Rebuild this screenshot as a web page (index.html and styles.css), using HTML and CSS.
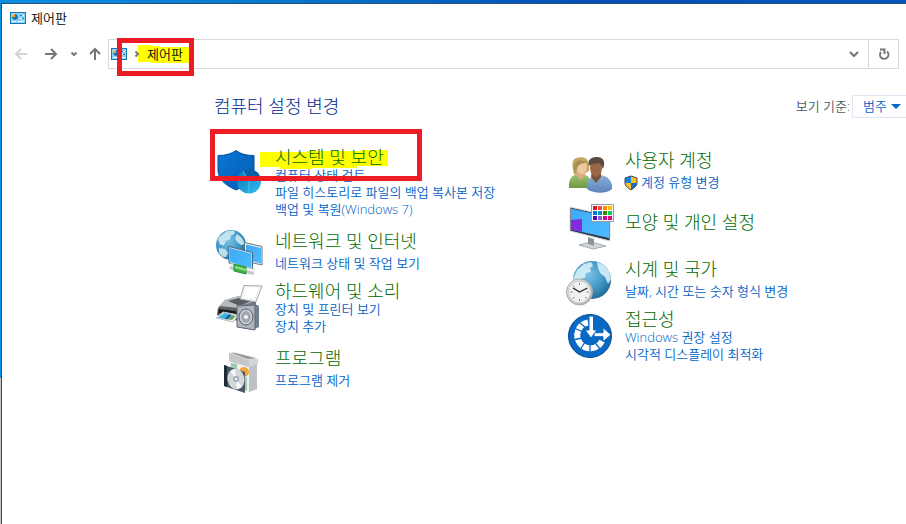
FILE: index.html
```html
<!DOCTYPE html>
<html lang="ko">
<head>
<meta charset="utf-8">
<title>제어판</title>
<link rel="stylesheet" href="styles.css">
</head>
<body>
<svg class="defs" width="0" height="0" aria-hidden="true">
  <defs>
    <linearGradient id="sky" x1="0" y1="0" x2="1" y2="1"><stop offset="0" stop-color="#3fa9f2"/><stop offset="1" stop-color="#4cbcff"/></linearGradient>
    <radialGradient id="globe" cx=".4" cy=".35" r=".7"><stop offset="0" stop-color="#7cc4e6"/><stop offset=".6" stop-color="#3f95c4"/><stop offset="1" stop-color="#1f6795"/></radialGradient>
    <linearGradient id="shield" x1="0" y1="0" x2="1" y2="1"><stop offset="0" stop-color="#0a78d8"/><stop offset="1" stop-color="#0459b0"/></linearGradient>
    <linearGradient id="pie" x1="0" y1="0" x2="1" y2="1"><stop offset="0" stop-color="#1272b8"/><stop offset="1" stop-color="#2cc0ee"/></linearGradient>
    <linearGradient id="metal" x1="0" y1="0" x2="1" y2="1"><stop offset="0" stop-color="#f2f3f4"/><stop offset="1" stop-color="#a2a6aa"/></linearGradient>
    <linearGradient id="dark" x1="0" y1="0" x2="0" y2="1"><stop offset="0" stop-color="#85898d"/><stop offset="1" stop-color="#34373b"/></linearGradient>
    <linearGradient id="green" x1="0" y1="0" x2="0" y2="1"><stop offset="0" stop-color="#a1c46e"/><stop offset="1" stop-color="#6e9a45"/></linearGradient>
    <linearGradient id="denim" x1="0" y1="0" x2="0" y2="1"><stop offset="0" stop-color="#8db1dc"/><stop offset="1" stop-color="#5b84b8"/></linearGradient>
    <symbol id="panel" viewBox="0 0 16 12">
      <rect x=".5" y=".5" width="15" height="11" fill="#8bd3fb" stroke="#1976ad"/>
      <circle cx="5" cy="5" r="3" fill="#fff"/><path d="M5 5V2a3 3 0 1 1-3 3z" fill="#1478bd"/><path d="M5 5H2a3 3 0 0 1 3-3z" fill="#f4a51c"/>
      <path d="M10 3.500h4M10 6.500h4" stroke="#fff"/><path d="M10 3.500h2M12 6.500h2" stroke="#176ba2"/><path d="M2 9.500h4M8 9.500h6" stroke="#e7f8ff"/>
    </symbol>
  </defs>
</svg>
<div class="window">
  <header class="titlebar"><svg class="panel-icon"><use href="#panel"/></svg><span>제어판</span></header>
  <div class="toolbar">
    <nav class="history" aria-label="탐색">
      <button class="tool tool-back" aria-label="뒤로" disabled><svg width="14" height="14" viewBox="0 0 14 14"><path d="M13 7H2M7 2 2 7l5 5"/></svg></button>
      <button class="tool" aria-label="앞으로"><svg width="14" height="14" viewBox="0 0 14 14"><path d="M1 7h11M7 2l5 5-5 5"/></svg></button>
      <button class="tool tool-recent" aria-label="최근 위치"><svg width="8" height="6" viewBox="0 0 8 6"><path d="m1.500 1.500 2.500 2.500 2.500-2.500"/></svg></button>
      <button class="tool tool-up" aria-label="위로"><svg width="12" height="14" viewBox="0 0 12 14"><path d="M6 13V2M1 7l5-5 5 5"/></svg></button>
    </nav>
    <div class="address">
      <div class="crumbs">
        <svg class="panel-icon"><use href="#panel"/></svg>
        <svg class="crumb-arrow" width="6" height="8" viewBox="0 0 6 8"><path d="m1.500 1.500 2.500 2.500-2.500 2.500"/></svg>
        <a class="crumb" href="#">제어판</a>
        <svg class="marker marker-crumb" viewBox="0 0 51 18" aria-hidden="true"><path d="M0 0h13v1h8v1h30v16H13v-1H0z"/></svg>
        <span class="frame frame-crumb"></span>
      </div>
      <button class="address-button" aria-label="이전 위치"><svg width="12" height="8" viewBox="0 0 12 8"><path d="m2 2 4 4 4-4"/></svg></button>
      <button class="address-button refresh" aria-label="새로 고침"><svg width="12" height="14" viewBox="0 0 12 14"><path d="M9 4.500A4.200 4.200 0 1 1 3 5M2 2.500h4.500V7"/></svg></button>
    </div>
  </div>
  <main class="content">
    <div class="heading-row">
      <h1>컴퓨터 설정 변경</h1>
      <div class="view"><label for="view">보기 기준:</label><span class="view-box"><select id="view"><option>범주</option><option>큰 아이콘</option><option>작은 아이콘</option></select></span></div>
    </div>
    <div class="categories">
      <div class="column">
        <section class="item highlighted">
          <svg class="icon" viewBox="0 0 48 48"><path d="M21 3.500c5 3.500 10 5 18 5V23c0 9-7 15-18 20C10 38 3 32 3 23V8.500c8 0 13-1.500 18-5z" fill="url(#shield)" stroke="#034d98"/><circle cx="34" cy="34.500" r="12" fill="url(#pie)"/><path d="M34 34.500 28 24a12 12 0 0 1 17 5z" fill="#0861a8"/><path d="M28 24l6 10.500L45 29M34 34.500V46" fill="none" stroke="#5fd5f5" stroke-width=".7"/></svg>
          <div class="text">
            <h2><a href="#">시스템 및 보안</a></h2>
            <ul><li><a href="#">컴퓨터 상태 검토</a></li><li><a href="#">파일 히스토리로 파일의 백업 복사본 저장</a></li><li><a href="#">백업 및 복원(Windows 7)</a></li></ul>
          </div>
          <svg class="marker marker-item" viewBox="0 0 128 19" aria-hidden="true"><path d="M0 2h47V1h54V0h27v16h-31v2H52v1H20v-2H0z"/></svg>
          <span class="frame frame-item"></span>
        </section>
        <section class="item single">
          <svg class="icon" viewBox="0 0 48 48"><circle cx="16" cy="14" r="15" fill="url(#globe)"/><path d="M4 6 12 0l7-.5 1 3-4 2-1 4-4 1-2 5-4-1-2-5zM4 17l6 1 3 4-2 4-3 0-4-4zM22 3l5 4 3 6-4 1-4-3-2-4z" fill="#d4edf4" opacity=".85"/><path d="M29.500 11.500 47 15.500V34l-17.500-4z" fill="#eef5f8" stroke="#68747c"/><path d="m31 13.500 15 3.500v15.500l-15-3.500z" fill="url(#sky)"/><path d="m14 15.500 23.500 6V39L14 32z" fill="#e9f3f8" stroke="#47647c"/><path d="m15 17 21.500 5.500v15L15 31z" fill="url(#sky)"/><path d="m15 35 24 6" stroke="#c4c8ca" stroke-width="6"/><path d="m15 34 24 6" stroke="#f6f6f6" stroke-width="2"/><path d="m19 33 12 3v7l-12-3z" fill="#3db545" stroke="#279238"/><path d="m20 36 11 3" stroke="#96e28c" stroke-width="2"/></svg>
          <div class="text"><h2><a href="#">네트워크 및 인터넷</a></h2><ul><li><a href="#">네트워크 상태 및 작업 보기</a></li></ul></div>
        </section>
        <section class="item">
          <svg class="icon" viewBox="0 0 48 48"><path d="m10 19 14-4 17 3v13l-18 9L2 34l1-7z" fill="url(#dark)"/><path d="m10 19 14-4 17 4-17 8-20-2z" fill="#b9bcbf"/><path d="m13 20 11-3 12 3-11 5z" fill="#585c60"/><path d="m29 4.500 18 .5-6 16-16-3z" fill="#f1f2f2" stroke="#aaa"/><path d="m31 6 13 .5-5 12-11-2z" fill="#fff"/><path d="m4 28 21 3v4L3 32z" fill="#17191b"/><path d="M1 37 8 31l16 3-6 7z" fill="#f5f5f5" stroke="#bbb"/><path d="m3 36.500 6-4.500 5 1-5 5z" fill="#35b5dc"/><path d="m9 38 5-5 3 1-4 4.500z" fill="#245ca6"/><path d="m13 38.500 4-4.500 4 1-4 4z" fill="#60ab69"/><path d="m22 24 16-2 6 3v21l-6 3-16-3z" fill="#737f8c"/><path d="m22 25 18-1v25l-18-3z" fill="#aeb5bf" stroke="#626c77"/><ellipse cx="31" cy="36" rx="7" ry="8" fill="#ced2d7" stroke="#565e68"/><ellipse cx="31" cy="36" rx="5" ry="6" fill="#a4a8ad"/><circle cx="31" cy="36" r="2" fill="#f1f2f3"/></svg>
          <div class="text"><h2><a href="#">하드웨어 및 소리</a></h2><ul><li><a href="#">장치 및 프린터 보기</a></li><li><a href="#">장치 추가</a></li></ul></div>
        </section>
        <section class="item single">
          <svg class="icon" viewBox="0 0 48 48"><path d="m15 9 19 6v29l-19-5z" fill="#f1f1f1"/><path d="m34 15 8-3v29l-8 3z" fill="#bfc2c5"/><path d="m14 5 5-1 24 7v5l-9 3-20-6z" fill="#d2d4d6"/><path d="m14 5 20 8v6l-20-6z" fill="#c4c6c9"/><path d="m17 5 16 6 8-1-21-5z" fill="#94989c"/><circle cx="29" cy="24" r="5" fill="#f2a637"/><path d="m16 15 6 1v8l-6-2z" fill="#a0caaf"/><path d="m26 31 6-2v14l-6-2z" fill="#a0caaf"/><path d="m9 17 21 7v21L9 38z" fill="#485767"/><path d="m9 17 3 1v21l-3-1z" fill="#202a34"/><ellipse cx="21" cy="31" rx="8.500" ry="10.500" transform="rotate(-12 21 31)" fill="#d3d7d8"/><path d="m21 31-6-8 5-2zM21 31l6 8-5 2z" fill="#fff" opacity=".8"/><circle cx="21" cy="31" r="3" fill="#9dafb8"/><circle cx="21" cy="31" r="1.300" fill="#f4f4f4"/></svg>
          <div class="text"><h2><a href="#">프로그램</a></h2><ul><li><a href="#">프로그램 제거</a></li></ul></div>
        </section>
      </div>
      <div class="column column-second">
        <section class="item single">
          <svg class="icon" viewBox="0 0 48 48"><path d="M8 20C6 11 9 7 15 7.500c7-1 10 4 9 13l-5 4H9z" fill="#c0a565"/><path d="M4 38c-1-10 4-14 11-14s12 4 12 14z" fill="url(#green)"/><path d="M12 19h8v6l-4 5-5-5z" fill="#d9ad83"/><ellipse cx="17" cy="17" rx="5" ry="7" fill="#ecc9a2"/><path d="M9 18c0-8 9-10 13-5-5 0-8 1-10 5l-2 5z" fill="#a98e50"/><path d="M22 39c-1-9 4-14 12-14s14 6 13 14c-5 5-18 5-25 0z" fill="url(#denim)"/><path d="M27 21h9v6l-5 6-5-6z" fill="#795039"/><ellipse cx="31" cy="18" rx="6" ry="9" fill="#9a6846"/><path d="M24 16c-2-7 3-9 8-9 6 0 9 4 6 12l-3-6c-4 1-8 0-11 3z" fill="#5a4a40"/></svg>
          <div class="text"><h2><a href="#">사용자 계정</a></h2><ul><li class="shielded"><svg class="uac" width="14" height="16" viewBox="0 0 14 16"><path d="M7 1 1 3v5c0 3 3 5 6 7z" fill="#1684d8"/><path d="m7 1 6 2v5H7z" fill="#fbbd28"/><path d="M1 8h6v7C4 13 1 11 1 8z" fill="#fbbd28"/><path d="M7 8h6c0 3-3 5-6 7z" fill="#1472c3"/><path d="M7 1 1 3v5c0 3 3 5 6 7 3-2 6-4 6-7V3z" fill="none" stroke="#454b50"/></svg><a href="#">계정 유형 변경</a></li></ul></div>
        </section>
        <section class="item plain">
          <svg class="icon" viewBox="0 0 48 48"><path d="m14 45 12-3 15 4-13 3z" fill="#d3d7da" stroke="#a5aaae"/><path d="m23 37 6 2v7l-6-2z" fill="#8d9398"/><path d="m5 7 40 9v25L5 31z" fill="#283848" stroke="#ddd"/><path d="m6 8.500 38 8.500v21L6 29.500z" fill="url(#sky)"/><path d="m6 20 11-1v13L6 29.500z" fill="#842be2"/><path d="M26.500 4.500h22v17h-22z" fill="#fff" stroke="#999"/><path d="M28 6h4v4h-4z" fill="#e81123"/><path d="M28 11h4v4h-4z" fill="#0078d7"/><path d="M28 16h4v4h-4z" fill="#5205bb"/><path d="M33 6h4v4h-4z" fill="#ff4b35"/><path d="M33 11h4v4h-4z" fill="#0098b7"/><path d="M33 16h4v4h-4z" fill="#8661bd"/><path d="M38 6h4v4h-4z" fill="#ff8c00"/><path d="M38 11h4v4h-4z" fill="#458500"/><path d="M38 16h4v4h-4z" fill="#d4009e"/><path d="M43 6h4v4h-4z" fill="#ffb900"/><path d="M43 11h4v4h-4z" fill="#00cc5a"/><path d="M43 16h4v4h-4z" fill="#e3006c"/></svg>
          <div class="text"><h2><a href="#">모양 및 개인 설정</a></h2></div>
        </section>
        <section class="item single">
          <svg class="icon" viewBox="0 0 48 48"><circle cx="27" cy="21" r="19" fill="url(#globe)"/><path d="m12 11 7-6 7-2 2 4-3 2 1 4-5 1-1 5-5 1-4 6-3-6zM32 3l7 3 5 6 2 8-3 5-3-7-5-4-2-5z" fill="#d6eff7" opacity=".9"/><circle cx="14.500" cy="33" r="13" fill="url(#metal)" stroke="#aaa"/><circle cx="14.500" cy="33" r="11" fill="#f0f1f1" stroke="#c7c9ca"/><path d="M14.500 24v2M14.500 40v2M5.500 33h2M21.500 33h2M8 26.500l1.500 1.500M20 38l1.500 1.500M8 39.500 9.500 38" stroke="#777"/><path d="m8 29 6.500 4 8-4" fill="none" stroke="#222" stroke-width="1.300"/></svg>
          <div class="text"><h2><a href="#">시계 및 국가</a></h2><ul><li><a href="#">날짜, 시간 또는 숫자 형식 변경</a></li></ul></div>
        </section>
        <section class="item">
          <svg class="icon" viewBox="0 0 48 48"><circle cx="25" cy="27" r="21.500" fill="#0868c4" stroke="#064d91"/><path d="M23 13.500A13 13 0 1 0 37 32" fill="none" stroke="#fff" stroke-width="6"/><path d="m9 19 9 4M8 31l9-2M15 41l5-8M25 44v-8M36 41l-5-6M14 13l7 6" stroke="#0868c4" stroke-width="1.300"/><path d="M29 23.700h9v-5l8 7-8 7v-5h-9z" fill="#fff" stroke="#0868c4"/><path d="M24 7h4.500v14h3.500l-6 8-6-8h4z" fill="#fff" stroke="#0868c4"/></svg>
          <div class="text"><h2><a href="#">접근성</a></h2><ul><li><a href="#">Windows 권장 설정</a></li><li><a href="#">시각적 디스플레이 최적화</a></li></ul></div>
        </section>
      </div>
    </div>
  </main>
</div>
</body>
</html>
```
FILE: styles.css
```css
* { box-sizing: border-box; }
html { height: 100%; }
body {
  margin: 0;
  min-height: 100vh;
  padding: 3px 0 0 1px;
  overflow: hidden;
  display: flex;
  font: 350 13px/17px "Open Sans", "Noto Sans CJK KR", sans-serif;
  color: #000;
  background: linear-gradient(#c6c6c6, #c6c6c6) 0 378px / 1px 100% no-repeat, linear-gradient(90deg, #0a8ee2, #0878d0 30%, #044fb5 65%, #0655bb);
}
.defs { position: absolute; }
a { color: inherit; text-decoration: none; }
h1, h2, ul { margin: 0; padding: 0; list-style: none; }
h1, h2 { font-weight: 300; }
button { padding: 0; border: 0; background: none; display: flex; align-items: center; justify-content: center; }
.window { flex: 1; min-width: 0; background: #fff; border: solid #2b506e; border-width: 1px 0 0 1px; }
.titlebar { display: flex; align-items: center; gap: 5px; height: 28px; padding-left: 8px; }
.panel-icon { width: 16px; height: 12px; flex: none; }
.toolbar { display: flex; align-items: center; margin-top: 7px; padding: 0 7px 0 12px; }
.history { display: flex; align-items: center; width: 94px; }
.tool svg, .crumb-arrow, .address-button svg { fill: none; stroke: #777; stroke-width: 2; }
.crumb-arrow { flex: none; }
.tool { width: 14px; margin-right: 16px; }
.tool.tool-back svg { stroke: #d5d5d5; }
.tool.tool-recent { width: 8px; margin: 0 11px 0 -4px; }
.tool.tool-up { width: 12px; margin: 0; }
.address { flex: 1; display: flex; height: 30px; border: 1px solid #d9d9d9; }
.crumbs { position: relative; flex: 1; display: flex; align-items: center; gap: 7px; padding-left: 2px; }
.crumbs .crumb-arrow { position: relative; z-index: 2; }
.crumb { position: relative; z-index: 2; }
.address-button { width: 28px; }
.refresh { width: 30px; border-left: 1px solid #d9d9d9; }
.marker { position: absolute; fill: #ff0; }
.frame { position: absolute; z-index: 3; border: 5px solid #ed1c24; pointer-events: none; }
.marker-crumb { left: 29px; top: 5px; width: 51px; height: 18px; }
.frame-crumb { left: 8px; top: -2px; width: 77px; height: 38px; }
.content { padding: 24px 0 0 212px; }
.heading-row { display: flex; align-items: center; justify-content: space-between; height: 26px; }
h1 { font-size: 18px; line-height: 24px; color: #002a90; }
.view { display: flex; align-items: center; gap: 2px; margin-right: -4px; color: #4a5868; }
.view-box { position: relative; }
.view-box::after { content: ""; position: absolute; right: 9px; top: 9px; border: solid transparent; border-width: 5px 5px 0; border-top-color: #0066cc; }
select { appearance: none; width: 58px; height: 23px; padding: 0 0 0 10px; border: 1px solid #dce6f2; border-radius: 2px; background: #fff; color: #005fc8; font: inherit; }
.categories { display: grid; grid-template-columns: 350px 1fr; padding: 28px 0 0 1px; }
.column-second { padding-top: 3px; }
.item { position: relative; display: flex; gap: 12px; margin-bottom: 13px; }
.single { margin-bottom: 9px; }
.plain { align-items: center; height: 44px; margin-bottom: 15px; }
.icon { width: 48px; height: 48px; flex: none; overflow: visible; }
.single .icon { margin-bottom: -7px; }
.plain .icon { align-self: flex-start; }
h2 { position: relative; z-index: 2; font-size: 18px; line-height: 20px; color: #006a00; }
.text ul { color: #005fc8; }
.single ul { margin-top: 4px; }
.shielded { display: flex; align-items: center; gap: 3px; height: 17px; }
.uac { margin-left: -1px; }
.marker-item { z-index: 1; left: 45px; top: 3px; width: 128px; height: 19px; }
.frame-item { left: -5px; top: -18px; width: 212px; height: 52px; }
```
